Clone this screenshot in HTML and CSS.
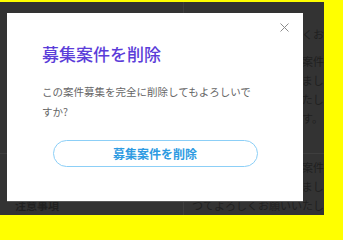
FILE: index.html
```html
<!DOCTYPE html>
<html lang="ja">
<head>
<meta charset="utf-8">
<title>募集案件を削除</title>
<link rel="stylesheet" href="styles.css">
</head>
<body>
<div class="frame">
  <div class="page">
    <div class="row row-first">
      <div class="label"></div>
      <div class="value">
        <p class="line">どうぞ今後ともよろしくお願いいたします</p>
        <div class="para">
          <p class="line">ご応募いただきました案件について</p>
          <p class="line">担当者より確認を行いました。</p>
          <p class="line">結果についてご連絡いたします。</p>
          <p class="line">宜しくお願いいたします。</p>
        </div>
      </div>
    </div>
    <div class="row row-second">
      <div class="label"><span class="label-text">注意事項</span></div>
      <div class="value">
        <p class="line">ご応募いただきました案件は</p>
        <p class="line">担当者より確認を行いました</p>
        <p class="line">つてよろしくお願いいたします。</p>
      </div>
    </div>
  </div>

  <div class="modal">
    <svg class="close" width="9" height="9" viewBox="0 0 9 9" aria-hidden="true">
      <path d="M0.5 0.5 L8.5 8.5 M8.5 0.5 L0.5 8.5" stroke="#8c8c8c" stroke-width="1" fill="none"/>
    </svg>
    <h2 class="title">募集案件を削除</h2>
    <p class="message">この案件募集を完全に削除してもよろしいですか?</p>
    <button class="danger-btn" type="button">募集案件を削除</button>
  </div>
</div>
</body>
</html>
```

FILE: styles.css
```css
html, body {
  margin: 0;
  padding: 0;
  background: #ffff00;
}

body {
  font-family: "Noto Sans CJK JP", "Noto Sans", sans-serif;
}

.frame {
  position: relative;
  margin-top: 2px;
  width: 324px;
  height: 213px;
  background: #333333;
  overflow: hidden;
}

/* faint page content behind the overlay */
.page {
  color: #202020;
  font-size: 11px;
  line-height: 19px;
}

.row {
  display: grid;
  grid-template-columns: 184px minmax(0, 1fr);
}

.row-first {
  border-bottom: 1px solid #3e3e3e;
}

.row-first .value {
  padding: 23px 0 25px 8px;
}

.row-second .value {
  padding: 4px 0 0 8px;
}

.row-second .label {
  padding: 42px 0 0 15px;
}

.label {
  border-right: 1px solid #3e3e3e;
}

.label-text {
  font-weight: 700;
}

.value {
  white-space: nowrap;
  overflow: hidden;
}

.line {
  margin: 0;
}

.para {
  margin-top: 8px;
}

/* dialog */
.modal {
  position: absolute;
  left: 7px;
  top: 11px;
  width: 296px;
  height: 188px;
  box-sizing: border-box;
  padding: 29px 35px 0;
  background: #ffffff;
  box-shadow: 0 1px 0 #575757;
}

.close {
  position: absolute;
  right: 14px;
  top: 10px;
  display: block;
}

.title {
  margin: 0;
  font-size: 17px;
  line-height: 24px;
  font-weight: 500;
  color: #5b3dd9;
}

.message {
  margin: 16px 0 0;
  width: 216px;
  font-size: 10.5px;
  line-height: 20px;
  color: #666666;
}

.danger-btn {
  display: block;
  margin: 18px auto 0;
  width: 205px;
  height: 27px;
  box-sizing: border-box;
  padding: 0;
  border: 1px solid #8ccff7;
  border-radius: 14px;
  background: #ffffff;
  color: #2e9be2;
  font-family: "Noto Sans CJK JP", "Noto Sans", sans-serif;
  font-size: 12px;
  font-weight: 700;
  line-height: 25px;
}
```
